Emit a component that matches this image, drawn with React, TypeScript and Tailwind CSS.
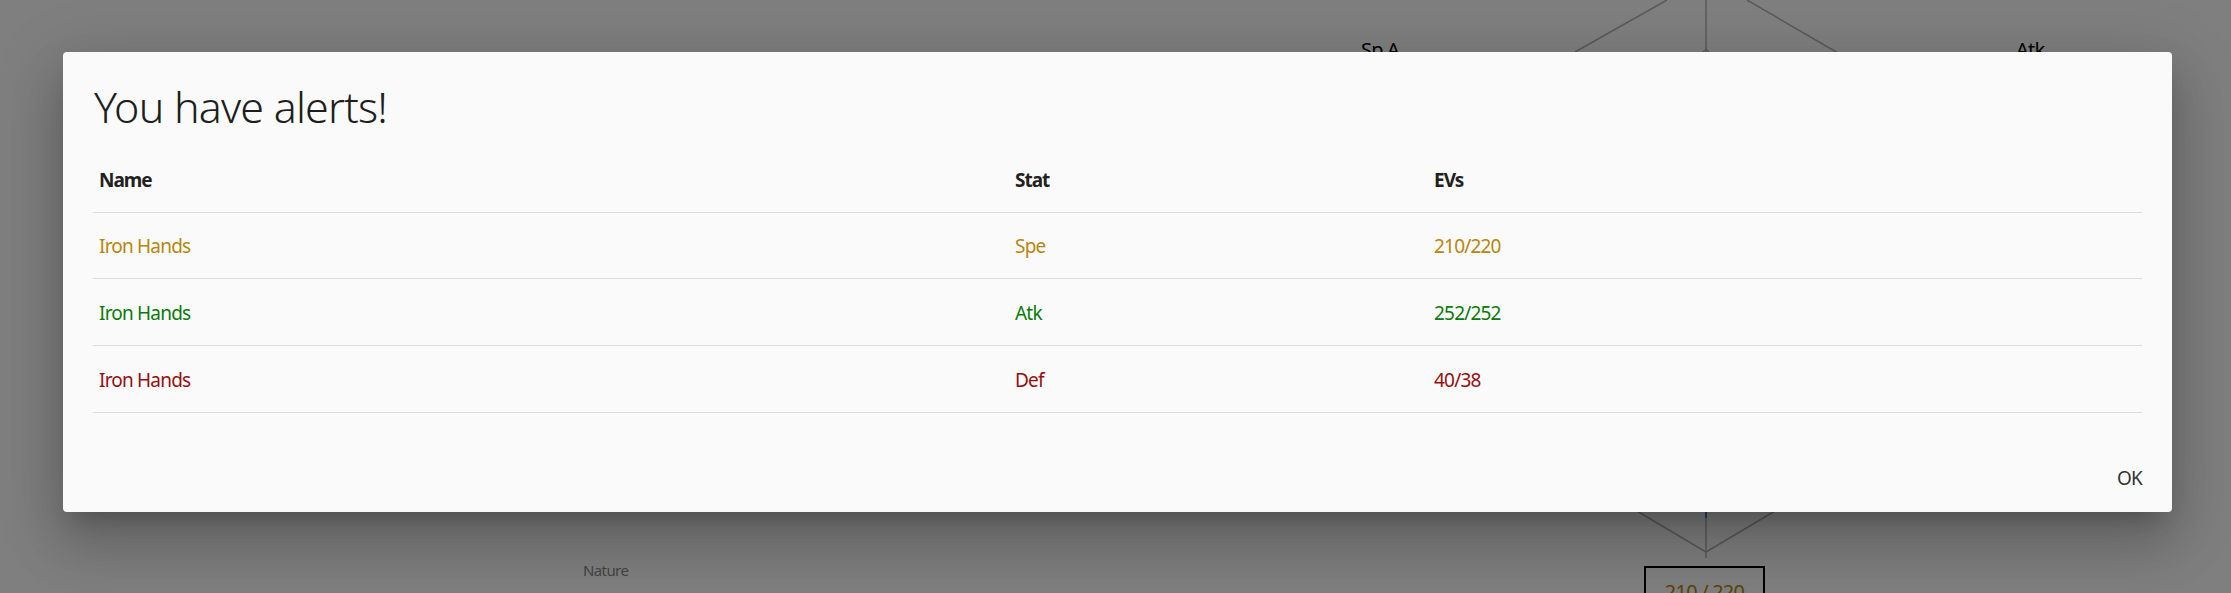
import React from "react";

const rows = [
  { name: "Iron Hands", stat: "Spe", evs: "210/220", color: "text-[#b8860b]" },
  { name: "Iron Hands", stat: "Atk", evs: "252/252", color: "text-[#0a7a0a]" },
  { name: "Iron Hands", stat: "Def", evs: "40/38", color: "text-[#960f0f]" },
];

function Background() {
  return (
    <div className="absolute inset-0 bg-white">
      <svg className="absolute inset-0" width="2231" height="593" viewBox="0 0 2231 593">
        <line x1="1706" y1="0" x2="1706" y2="558" stroke="#b4b4b4" strokeWidth="1.5" />
        <line x1="1667" y1="0" x2="1575" y2="52" stroke="#b4b4b4" strokeWidth="1.5" />
        <line x1="1747" y1="0" x2="1838" y2="53" stroke="#b4b4b4" strokeWidth="1.5" />
        <polyline points="1700,55 1706,49 1712,55" fill="none" stroke="#b4b4b4" strokeWidth="1.2" />
        <line x1="1637" y1="511" x2="1706" y2="552" stroke="#b4b4b4" strokeWidth="1.5" />
        <line x1="1775" y1="511" x2="1706" y2="552" stroke="#b4b4b4" strokeWidth="1.5" />
        <line x1="1706" y1="512" x2="1706" y2="518" stroke="#1e63c8" strokeWidth="1.5" />
      </svg>
      <div className="absolute left-[1361px] top-[38px] text-[20px] leading-[24px] tracking-[-0.8px] text-black">
        Sp A
      </div>
      <div className="absolute left-[2016px] top-[38px] text-[20px] leading-[24px] tracking-[-0.8px] text-black">
        Atk
      </div>
      <div className="absolute left-[583px] top-[560px] text-[15px] leading-[20px] tracking-[-0.6px] text-[#888]">
        Nature
      </div>
      <div className="absolute left-[1644px] top-[566px] w-[121px] h-[40px] border-2 border-black flex justify-center pt-[12px] text-[20px] leading-[24px] tracking-[-0.8px] text-[#b8860b]">
        210 / 220
      </div>
    </div>
  );
}

export default function App() {
  return (
    <div className="relative w-full h-[593px] overflow-hidden font-['Noto_Sans',sans-serif]">
      <Background />
      <div className="absolute inset-0 bg-black/50 pt-[52px] pl-[63px]">
        <div className="w-[2109px] h-[460px] bg-[#fafafa] rounded-[4px] flex flex-col px-[30px] shadow-[0_15px_21px_-10px_rgba(0,0,0,0.2),0_34px_53px_4px_rgba(0,0,0,0.14),0_13px_64px_11px_rgba(0,0,0,0.12)]">
          <h2 className="pt-[29px] pl-[1px] text-[43px] leading-[52px] font-light tracking-[-0.8px] text-[#1e1e1e]">
            You have alerts!
          </h2>
          <div className="mt-[13px] text-[19px]">
            <div className="grid grid-cols-[916px_419px_1fr] h-[67px] pt-[2px] items-center border-b border-[#dcdcdc] font-bold tracking-[-1px] text-[#212121]">
              <div className="pl-[6px]">Name</div>
              <div className="pl-[6px]">Stat</div>
              <div className="pl-[6px]">EVs</div>
            </div>
            {rows.map((r, i) => (
              <div
                key={i}
                className={`grid grid-cols-[916px_419px_1fr] pt-[2px] items-center border-b border-[#dcdcdc] tracking-[-0.8px] ${r.color} ${i === 0 ? "h-[66px]" : "h-[67px]"}`}
              >
                <div className="pl-[6px]">{r.name}</div>
                <div className="pl-[6px]">{r.stat}</div>
                <div className="pl-[6px]">{r.evs}</div>
              </div>
            ))}
          </div>
          <div className="flex-1" />
          <div className="flex justify-end pb-[22px] pr-[-2px]">
            <button className="text-[19px] leading-[24px] tracking-[-0.8px] text-[#333]">OK</button>
          </div>
        </div>
      </div>
    </div>
  );
}
